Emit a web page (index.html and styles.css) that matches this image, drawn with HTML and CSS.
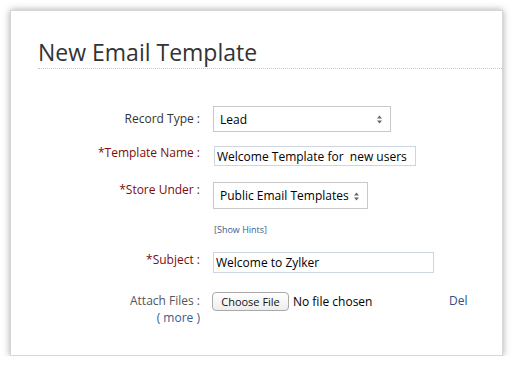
FILE: index.html
```html
<!DOCTYPE html>
<html lang="en">
<head>
    <meta charset="UTF-8" />
    <title>New Email Template</title>
    <link rel="stylesheet" href="styles.css">
</head>
<body>
    <div class="template-card">
        <h2>New Email Template</h2>
        <form class="template-form">
            <div class="row row-record">
                <label class="field-label">Record Type :</label>
                <div class="select-wrap select-record">
                    <select><option>Lead</option></select>
                    <svg class="arrows" width="5" height="9" viewBox="0 0 5 9"><path d="M2.5 0.5 L5 3.5 H0 Z M2.5 8.5 L5 5.5 H0 Z" fill="#666"/></svg>
                </div>
            </div>
            <div class="row row-name">
                <label class="field-label required">*Template Name :</label>
                <input type="text" class="text-input name-input" value="Welcome Template for&nbsp; new users" />
            </div>
            <div class="row row-store">
                <label class="field-label required">*Store Under :</label>
                <div class="select-wrap select-store">
                    <select><option>Public Email Templates</option></select>
                    <svg class="arrows" width="5" height="9" viewBox="0 0 5 9"><path d="M2.5 0.5 L5 3.5 H0 Z M2.5 8.5 L5 5.5 H0 Z" fill="#666"/></svg>
                </div>
            </div>
            <div class="row row-hints">
                <span class="field-label"></span>
                <a href="#" class="hints">[Show Hints]</a>
            </div>
            <div class="row row-subject">
                <label class="field-label required">*Subject :</label>
                <input type="text" class="text-input subject-input" value="Welcome to Zylker" />
            </div>
            <div class="row row-attach">
                <div class="field-label attach-label">
                    Attach Files :<br>
                    <a href="#" class="more">( more )</a>
                </div>
                <div class="file-box">
                    <button type="button" class="choose-btn">Choose File</button>
                    <span class="no-file">No file chosen</span>
                </div>
                <a href="#" class="del">Del</a>
            </div>
        </form>
    </div>
</body>
</html>
```

FILE: styles.css
```css
body {
    margin: 0;
    background: #fff;
    font-family: 'Open Sans', 'Liberation Sans', sans-serif;
    color: #333;
}
.template-card {
    margin: 10px 0 0 10px;
    width: 493px;
    height: 346px;
    box-sizing: border-box;
    background: #fff;
    border: 1px solid #d6d6d6;
    box-shadow: 0 0 7px rgba(0, 0, 0, 0.35);
}
h2 {
    margin: 26px 0 0 27px;
    padding-bottom: 1px;
    font-size: 23px;
    font-weight: 400;
    line-height: 30px;
    color: #333;
    border-bottom: 1px dotted #c8c8c8;
}
.template-form {
    padding-top: 37px;
}
.row {
    display: flex;
    align-items: flex-start;
}
.field-label {
    width: 189px;
    flex: none;
    margin-right: 13px;
    text-align: right;
    font-size: 12px;
    line-height: 18px;
    color: #333;
}
.required {
    color: #7d0b0b;
}
.select-wrap {
    position: relative;
}
.select-wrap select {
    -webkit-appearance: none;
    appearance: none;
    display: block;
    border: 1px solid #c9c9c9;
    border-radius: 0;
    background: #fff;
    font-family: 'Open Sans', 'Liberation Sans', sans-serif;
    font-size: 12px;
    color: #000;
    padding: 0 0 0 6px;
    margin: 0;
    outline: none;
}
.select-wrap .arrows {
    position: absolute;
    top: 50%;
    margin-top: -4px;
    right: 9px;
}
.row-record .field-label {
    margin-top: 4px;
}
.select-record select {
    width: 178px;
    height: 26px;
}
.row-name {
    margin-top: 14px;
}
.row-name .field-label {
    margin-top: -2px;
}
.text-input {
    box-sizing: border-box;
    border: 1px solid #cdd6e0;
    font-family: 'Open Sans', 'Liberation Sans', sans-serif;
    font-size: 12px;
    color: #000;
    padding: 0 2px;
    margin: 0;
    outline: none;
}
.name-input {
    width: 202px;
    height: 20px;
    margin-left: 1px;
}
.row-store {
    margin-top: 16px;
}
.row-store .field-label {
    margin-top: -1px;
}
.select-store select {
    width: 155px;
    height: 27px;
}
.row-hints {
    margin-top: 14px;
}
.hints {
    margin-left: 1px;
    font-size: 9px;
    line-height: 14px;
    color: #3a5b8c;
    text-decoration: none;
}
.row-subject {
    margin-top: 15px;
}
.row-subject .field-label {
    margin-top: -1px;
}
.subject-input {
    width: 221px;
    height: 21px;
}
.row-attach {
    margin-top: 19px;
}
.attach-label {
    color: #555;
    line-height: 17px;
    margin-top: 0;
}
.more {
    color: #3a5b8c;
    text-decoration: none;
}
.file-box {
    width: 237px;
    flex: none;
    display: flex;
    align-items: center;
    margin-left: -1px;
}
.choose-btn {
    width: 77px;
    height: 19px;
    padding: 0;
    border: 1px solid #a9a9a9;
    border-radius: 4px;
    background: linear-gradient(#fff, #ededed);
    font-family: 'Open Sans', 'Liberation Sans', sans-serif;
    font-size: 11px;
    color: #111;
}
.no-file {
    margin-left: 4px;
    font-size: 12px;
    color: #000;
}
.del {
    font-size: 12px;
    line-height: 18px;
    color: #2d4f86;
    text-decoration: none;
}
```
